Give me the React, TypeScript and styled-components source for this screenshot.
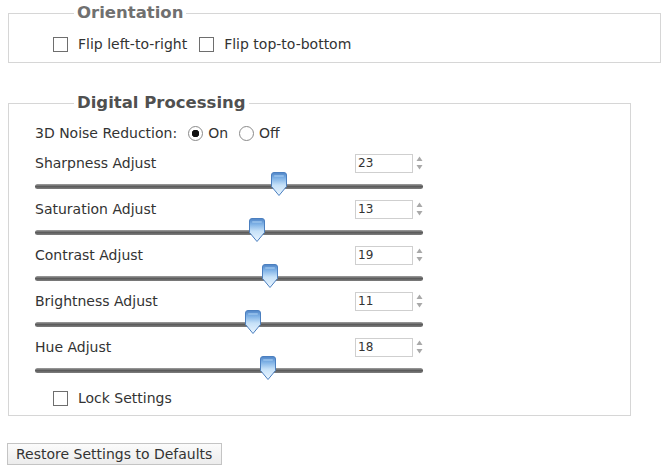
import React from 'react';
import styled, { createGlobalStyle } from 'styled-components';

const GlobalStyle = createGlobalStyle`
  body {
    margin: 0;
    background: #fff;
    font-family: "DejaVu Sans", Verdana, sans-serif;
    color: #333;
  }
`;

const Page = styled.div`
  padding: 3px 0 0 8px;
`;

const Group = styled.fieldset<{ $width: number; $gap?: number }>`
  width: ${(p) => p.$width}px;
  box-sizing: border-box;
  margin: ${(p) => p.$gap || 0}px 0 0 0;
  padding: 0;
  border: 1px solid #d6d6d6;
`;

const Legend = styled.legend<{ $color: string }>`
  margin-left: 65px;
  padding: 0 3px;
  font-size: 16.5px;
  font-weight: bold;
  line-height: 20px;
  color: ${(p) => p.$color};
`;

const Body = styled.div<{ $pad: string }>`
  padding: ${(p) => p.$pad};
`;

const Row = styled.div<{ $indent?: number; $top?: number }>`
  display: flex;
  align-items: center;
  height: 20px;
  margin-left: ${(p) => p.$indent || 0}px;
  margin-top: ${(p) => p.$top || 0}px;
  font-size: 14px;
`;

const Check = styled.input.attrs({ type: 'checkbox' })`
  appearance: none;
  width: 15px;
  height: 15px;
  margin: 0 10px 0 0;
  border: 1px solid #6e6e6e;
  background: #fff;
  box-sizing: border-box;
`;

const CheckLabel = styled.label`
  display: flex;
  align-items: center;
  margin-right: 12px;
`;

const Radio = styled.input.attrs({ type: 'radio' })`
  appearance: none;
  width: 15px;
  height: 15px;
  margin: 0 5px 0 0;
  border: 1px solid #8a8a8a;
  border-radius: 50%;
  box-sizing: border-box;
  background: #fff;
  &:checked {
    background: radial-gradient(circle, #111 0 3.5px, #fff 4px);
  }
`;

const RadioLabel = styled.label`
  display: flex;
  align-items: center;
  margin-left: 11px;
`;

const AdjustList = styled.div`
  width: 388px;
  margin-top: 10px;
`;

const Header = styled.div`
  display: grid;
  grid-template-columns: 1fr 58px 10px;
  align-items: center;
  height: 20px;
  font-size: 14px;
`;

const NumberBox = styled.input`
  width: 58px;
  height: 19px;
  box-sizing: border-box;
  margin: 0;
  padding: 0 2px;
  border: 1px solid #cfcfcf;
  font-family: "DejaVu Sans", Verdana, sans-serif;
  font-size: 12px;
  color: #333;
  outline: none;
`;

const Spin = styled.svg`
  justify-self: end;
`;

const SliderArea = styled.div`
  display: flex;
  align-items: center;
  height: 26px;
`;

const Track = styled.div`
  position: relative;
  width: 100%;
  height: 5px;
  border-radius: 3px;
  background: linear-gradient(to bottom, #a0a0a0, #5c5c5c 50%, #7e7e7e);
`;

const Handle = styled.svg`
  position: absolute;
  top: -12px;
  margin-left: -8px;
`;

const RestoreButton = styled.button`
  margin: 27px 0 0 -1px;
  height: 22px;
  width: 215px;
  padding: 0 0 0 8px;
  text-align: left;
  border: 1px solid #c4c4c4;
  background: linear-gradient(to bottom, #fbfbfb, #ececec);
  font-family: "DejaVu Sans", Verdana, sans-serif;
  font-size: 14px;
  color: #333;
`;

const MIN = -90;
const MAX = 90;

const Spinner = () => (
  <Spin width="7" height="16" viewBox="0 0 7 16">
    <path d="M0.5 6 L3.5 1.5 L6.5 6 Z" fill="#a8a8a8" />
    <path d="M0.5 10 L3.5 14.5 L6.5 10 Z" fill="#a8a8a8" />
  </Spin>
);

const Slider = ({ value }: { value: number }) => {
  const pct = ((value - MIN) / (MAX - MIN)) * 100;
  return (
    <SliderArea>
      <Track>
        <Handle width="16" height="24" viewBox="0 0 16 24" style={{ left: `${pct}%` }}>
          <defs>
            <linearGradient id="knob" x1="0" y1="0" x2="0" y2="1">
              <stop offset="0" stopColor="#4f84c6" />
              <stop offset="0.25" stopColor="#7fb2e6" />
              <stop offset="0.55" stopColor="#c6e1f8" />
              <stop offset="1" stopColor="#eaf5ff" />
            </linearGradient>
          </defs>
          <path
            d="M3 0.5 H13 Q15.5 0.5 15.5 3 V14.5 L8 23.5 L0.5 14.5 V3 Q0.5 0.5 3 0.5 Z"
            fill="url(#knob)"
            stroke="#4b7fbf"
          />
          <rect x="3" y="3" width="10" height="2" rx="1" fill="#9cc6ee" opacity="0.7" />
        </Handle>
      </Track>
    </SliderArea>
  );
};

const adjustments = [
  { label: 'Sharpness Adjust', value: 23 },
  { label: 'Saturation Adjust', value: 13 },
  { label: 'Contrast Adjust', value: 19 },
  { label: 'Brightness Adjust', value: 11 },
  { label: 'Hue Adjust', value: 18 },
];

export default function App() {
  return (
    <Page>
      <GlobalStyle />
      <Group $width={653}>
        <Legend $color="#707070">Orientation</Legend>
        <Body $pad="11px 0 8px 44px">
          <Row>
            <CheckLabel>
              <Check />
              Flip left-to-right
            </CheckLabel>
            <CheckLabel>
              <Check />
              Flip top-to-bottom
            </CheckLabel>
          </Row>
        </Body>
      </Group>

      <Group $width={623} $gap={30}>
        <Legend $color="#505050">Digital Processing</Legend>
        <Body $pad="10px 0 7px 26px">
          <Row>
            3D Noise Reduction:
            <RadioLabel>
              <Radio name="nr" defaultChecked />
              On
            </RadioLabel>
            <RadioLabel>
              <Radio name="nr" />
              Off
            </RadioLabel>
          </Row>
          <AdjustList>
            {adjustments.map((a) => (
              <div key={a.label}>
                <Header>
                  <span>{a.label}</span>
                  <NumberBox defaultValue={a.value} />
                  <Spinner />
                </Header>
                <Slider value={a.value} />
              </div>
            ))}
          </AdjustList>
          <Row $indent={18} $top={5}>
            <CheckLabel>
              <Check />
              Lock Settings
            </CheckLabel>
          </Row>
        </Body>
      </Group>

      <RestoreButton>Restore Settings to Defaults</RestoreButton>
    </Page>
  );
}
